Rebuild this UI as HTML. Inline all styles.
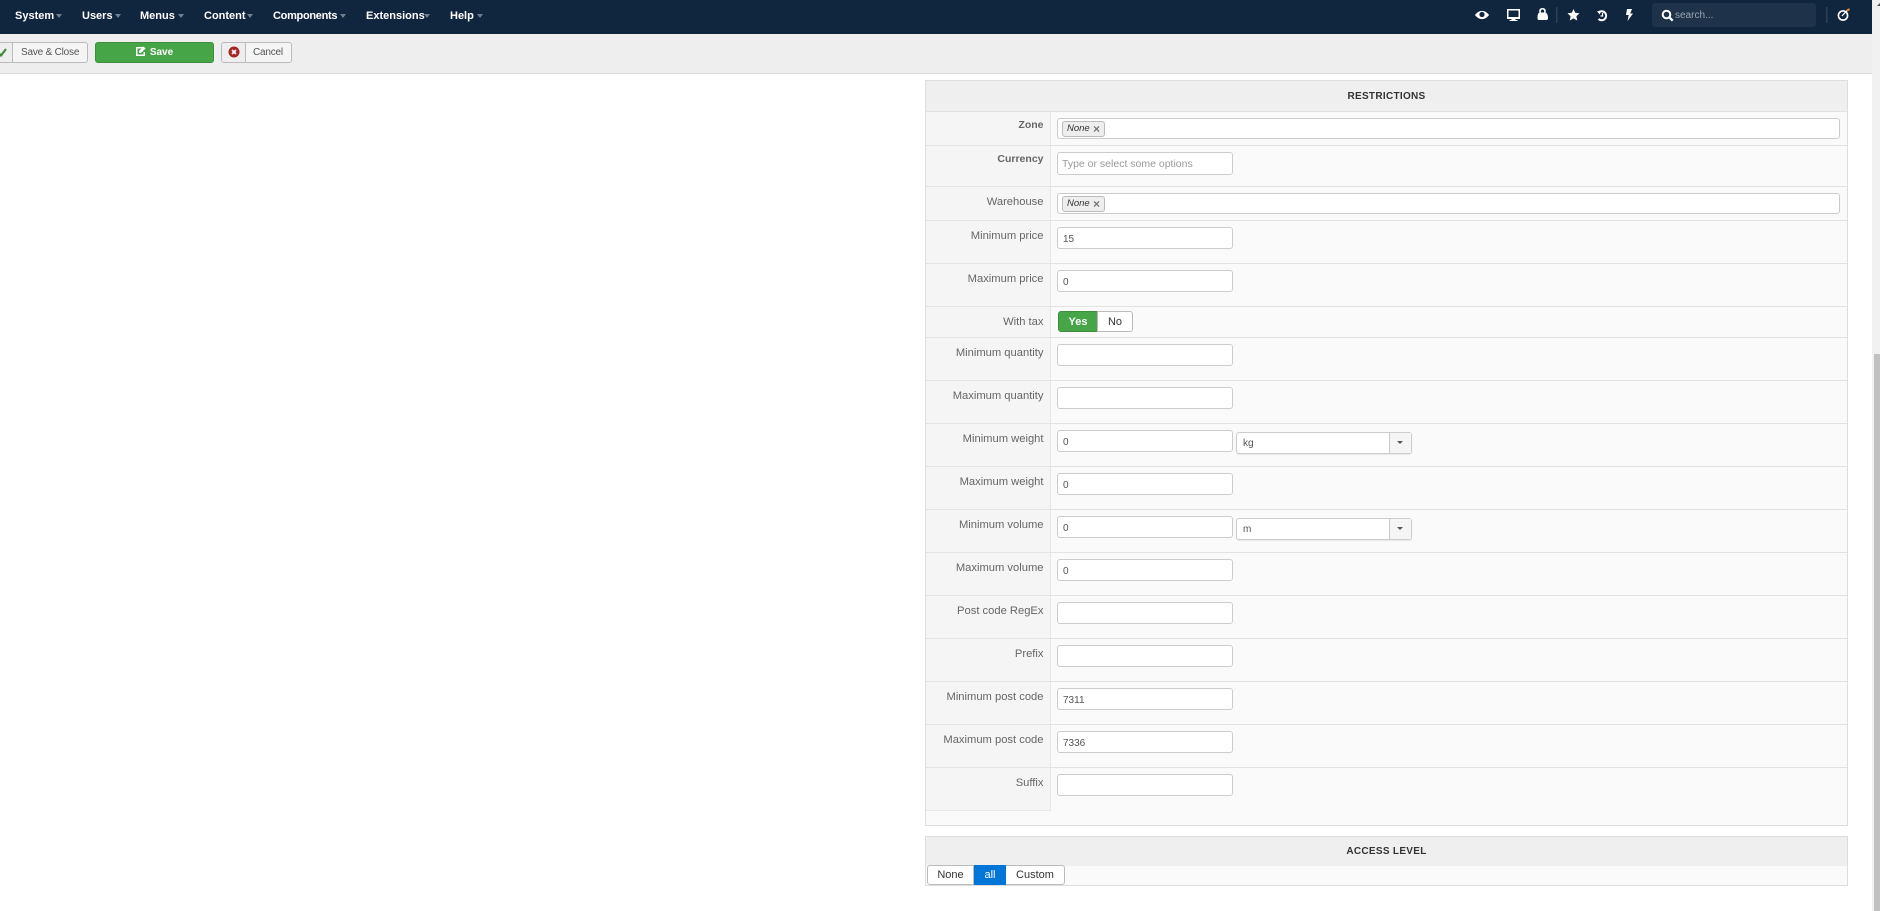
<!DOCTYPE html>
<html><head><meta charset="utf-8"><title>Restrictions</title>
<style>
html,body{margin:0;padding:0;width:1880px;height:911px;overflow:hidden;background:#fff;font-family:"Liberation Sans",Arial,sans-serif;font-size:12px;color:#555}
.a{position:absolute;box-sizing:border-box}
#top{left:0;top:0;width:1872px;height:34px;background:#10263f}
.m{position:absolute;top:7px;line-height:18px;color:#fff;font-weight:bold;font-size:11px;white-space:nowrap}
.c{position:absolute;top:14px;width:0;height:0;border:3.500px solid transparent;border-top:4px solid #6f7f8f;border-bottom:0}
#bar{left:0;top:34px;width:1872px;height:40px;background:#eee;border-bottom:1px solid #ddd}
.btn{position:absolute;top:42px;height:21px;border:1px solid #bbb;border-radius:3px;background:#f5f5f5;color:#555;font-size:10px;line-height:19px;box-sizing:border-box;white-space:nowrap}
.box{position:absolute;left:925px;width:923px;border:1px solid #ddd;background:#fafafa;box-sizing:border-box}
.hd{position:absolute;left:926px;width:921px;background:#efefef;text-align:center;font-weight:bold;font-size:10px;letter-spacing:.3px;color:#333}
.lc{position:absolute;left:926px;width:124px;background:#f5f5f5;border-right:1px solid #e8e8e8;border-bottom:1px solid #e8e8e8;box-sizing:content-box}
.hr{position:absolute;left:926px;width:921px;height:1px;background:#e2e2e2}
.l{position:absolute;left:926px;width:117.500px;text-align:right;line-height:18px;color:#666;font-size:11.200px;white-space:nowrap;margin-top:1px}
.i{position:absolute;left:1057px;width:176px;height:22px;background:#fff;border:1px solid #ccc;border-radius:3px;box-sizing:border-box;font-size:10px;line-height:23px;padding-left:5px;color:#555}
.z{position:absolute;left:1057px;width:783px;height:21px;background:#fff;border:1px solid #ccc;border-radius:3px;box-sizing:border-box}
.tag{position:absolute;left:4px;top:2px;width:43px;height:16px;background:#eee;border:1px solid #bbb;border-radius:3px;box-sizing:border-box;font-size:9.500px;font-style:italic;line-height:14px;padding-left:4px;color:#333}
.tag b{position:absolute;left:30px;top:0;font-style:normal;font-weight:bold;font-size:12px;color:#777}
.s{position:absolute;left:1236px;width:176px;height:22px;background:#fff;border:1px solid #ccc;border-radius:3px;box-sizing:border-box;font-size:10px;line-height:21px;padding-left:6px;color:#555;box-shadow:0 1px 1px rgba(0,0,0,.08)}
.s i{position:absolute;right:0;top:0;width:21px;height:20px;background:#f5f5f5;border-left:1px solid #ccc}
.s i:after{content:"";position:absolute;left:7px;top:8px;border:3px solid transparent;border-top:3px solid #555;border-bottom:0}
</style></head><body>
<div class="a" id="top"></div>
<span class="m" style="left:15px">System</span><i class="c" style="left:56px"></i>
<span class="m" style="left:82px">Users</span><i class="c" style="left:115px"></i>
<span class="m" style="left:140px">Menus</span><i class="c" style="left:178px"></i>
<span class="m" style="left:204px">Content</span><i class="c" style="left:247px"></i>
<span class="m" style="left:273px;letter-spacing:-.3px">Components</span><i class="c" style="left:340px"></i>
<span class="m" style="left:366px">Extensions</span><i class="c" style="left:424px"></i>
<span class="m" style="left:450px">Help</span><i class="c" style="left:477px"></i>

<svg class="a" style="left:1470px;top:0" width="410" height="34" viewBox="1470 0 410 34">
<path d="M1475 15c4-5.500 10-5.500 14 0c-4 5.500-10 5.500-14 0z" fill="#fff"/><circle cx="1482" cy="14.500" r="2.600" fill="#10263f"/>
<path d="M1507 9h13v10h-4.500v1h2v1h-8v-1h2v-1h-4.500z" fill="#fff"/><rect x="1508.500" y="10.500" width="10" height="6.500" fill="#10263f"/>
<path d="M1537.500 18c0-3 .5-5 2-5.500c-1-3 .8-4.500 3-4.500s4 1.500 3 4.500c1.500 .5 2.500 2.500 2.500 5.500c0 1.500-.5 2-2 2h-6.500c-1.500 0-2-.5-2-2z" fill="#fff"/><path d="M1541 12.500c-.5-2 .3-3 1.500-3s2 1 1.500 3z" fill="#10263f"/>
<rect x="1556" y="7" width="1.500" height="16" fill="#2c4156"/>
<path d="M1573.500 9l1.700 3.800 4.300 .5-3.100 2.900 .8 4.300-3.700-2.100-3.700 2.100 .8-4.300-3.100-2.900 4.300-.5z" fill="#fff"/>
<path d="M1598.500 12.500a4.500 4.500 0 1 1 0 6.500" fill="none" stroke="#fff" stroke-width="2"/><path d="M1597 11l4 .5-1.500 3z" fill="#fff"/><path d="M1602.500 13v3h-2" fill="none" stroke="#fff" stroke-width="1.300"/>
<path d="M1627 9h5l-1.800 4.500h2.800l-5.500 7.500 1.200-6h-2.700z" fill="#fff"/>
<rect x="1826" y="7" width="1.500" height="16" fill="#2c4156"/>
<circle cx="1843" cy="15.500" r="4.600" fill="none" stroke="#fff" stroke-width="1.600"/><path d="M1842 16l5-5.500" stroke="#fff" stroke-width="1.300"/><path d="M1846.500 11l3-2" stroke="#e08a2e" stroke-width="2"/>
</svg>
<div class="a" style="left:1652px;top:3px;width:164px;height:24px;background:#1e3349;border-radius:3px"></div>
<svg class="a" style="left:1661px;top:9px" width="13" height="13" viewBox="0 0 13 13"><circle cx="5.500" cy="5.500" r="3.800" fill="none" stroke="#fff" stroke-width="2"/><path d="M8.200 8.200l3.500 3.500" stroke="#fff" stroke-width="2.200"/></svg>
<div class="a" style="left:1675px;top:7px;line-height:18px;font-size:10px;color:#98a4b0">search...</div>

<div class="a" id="bar"></div>
<div class="btn" style="left:-16px;width:104px;"><span style="position:absolute;left:0;top:0;width:27px;height:19px;background:#eee;border-right:1px solid #bbb"></span><svg style="position:absolute;left:13px;top:5px" width="10" height="9" viewBox="0 0 10 9"><path d="M.5 5L3 7.500L8 1" fill="none" stroke="#3d8b3d" stroke-width="2.200"/></svg><span style="position:absolute;left:36px;letter-spacing:-.2px">Save &amp; Close</span></div>
<div class="btn" style="left:95px;width:119px;background:#46a546;border-color:#3c8e3c;color:#fff;text-align:center;font-weight:bold;font-size:10px"><svg style="position:relative;top:1px;margin-right:4px" width="10" height="10" viewBox="0 0 10 10"><path d="M0 1h7v1.500H1.500v6h6V6H9v4H0z" fill="#fff"/><path d="M3 5l4.500-4.500L9.500 2.500L5 7H3z" fill="#fff"/></svg>Save</div>
<div class="btn" style="left:221px;width:71px;"><span style="position:absolute;left:0;top:0;width:23px;height:19px;background:#eee;border-right:1px solid #bbb;border-radius:3px 0 0 3px"></span><svg style="position:absolute;left:6px;top:3px" width="12" height="12" viewBox="0 0 12 12"><circle cx="6" cy="6" r="5.500" fill="#a52828"/><path d="M4 4l4 4M8 4l-4 4" stroke="#fff" stroke-width="1.600"/></svg><span style="position:absolute;left:31px;letter-spacing:-.2px">Cancel</span></div>

<div class="box" style="top:80px;height:746px"></div>
<div class="hd" style="top:81px;height:30px;line-height:31px">RESTRICTIONS</div>
<div class="lc" style="top:111px;height:699px"></div>
<div class="hr" style="top:111px"></div><div class="hr" style="top:145px"></div><div class="hr" style="top:186px"></div><div class="hr" style="top:220px"></div><div class="hr" style="top:263px"></div><div class="hr" style="top:306px"></div><div class="hr" style="top:337px"></div><div class="hr" style="top:380px"></div><div class="hr" style="top:423px"></div><div class="hr" style="top:466px"></div><div class="hr" style="top:509px"></div><div class="hr" style="top:552px"></div><div class="hr" style="top:595px"></div><div class="hr" style="top:638px"></div><div class="hr" style="top:681px"></div><div class="hr" style="top:724px"></div><div class="hr" style="top:767px"></div>

<div class="l" style="top:116px;font-weight:bold;font-size:10.500px;margin-top:0">Zone</div>
<div class="z" style="top:118px"><div class="tag">None<b>×</b></div></div>
<div class="l" style="top:150px;font-weight:bold;font-size:10.500px;margin-top:0">Currency</div>
<div class="i" style="top:152px;height:23px;color:#999;font-size:10.500px;padding-left:4px">Type or select some options</div>
<div class="l" style="top:192px">Warehouse</div>
<div class="z" style="top:193px"><div class="tag">None<b>×</b></div></div>
<div class="l" style="top:226px">Minimum price</div><div class="i" style="top:227px">15</div>
<div class="l" style="top:269px">Maximum price</div><div class="i" style="top:270px">0</div>
<div class="l" style="top:312px">With tax</div>
<div class="a" style="left:1058px;top:311px;width:40px;height:21px;background:#46a546;border:1px solid #3c8e3c;border-radius:3px 0 0 3px;color:#fff;font-weight:bold;font-size:11px;text-align:center;line-height:20px">Yes</div>
<div class="a" style="left:1097px;top:311px;width:36px;height:21px;background:#fff;border:1px solid #bbb;border-radius:0 3px 3px 0;color:#333;font-size:11px;text-align:center;line-height:20px">No</div>
<div class="l" style="top:343px">Minimum quantity</div><div class="i" style="top:344px"></div>
<div class="l" style="top:386px">Maximum quantity</div><div class="i" style="top:387px"></div>
<div class="l" style="top:429px">Minimum weight</div><div class="i" style="top:430px">0</div>
<div class="s" style="top:432px">kg<i></i></div>
<div class="l" style="top:472px">Maximum weight</div><div class="i" style="top:473px">0</div>
<div class="l" style="top:515px">Minimum volume</div><div class="i" style="top:516px">0</div>
<div class="s" style="top:518px">m<i></i></div>
<div class="l" style="top:558px">Maximum volume</div><div class="i" style="top:559px">0</div>
<div class="l" style="top:601px">Post code RegEx</div><div class="i" style="top:602px"></div>
<div class="l" style="top:644px">Prefix</div><div class="i" style="top:645px"></div>
<div class="l" style="top:687px">Minimum post code</div><div class="i" style="top:688px">7311</div>
<div class="l" style="top:730px">Maximum post code</div><div class="i" style="top:731px">7336</div>
<div class="l" style="top:773px">Suffix</div><div class="i" style="top:774px"></div>

<div class="box" style="top:836px;height:50px"></div>
<div class="hd" style="top:837px;height:29px;line-height:30px">ACCESS LEVEL</div>
<div class="a" style="left:927px;top:865px;width:47px;height:20px;background:#fff;border:1px solid #bbb;border-radius:3px 0 0 3px;color:#333;font-size:11px;text-align:center;line-height:19px">None</div>
<div class="a" style="left:974px;top:865px;width:32px;height:20px;background:#0275d8;color:#fff;font-size:11px;text-align:center;line-height:21px">all</div>
<div class="a" style="left:1006px;top:865px;width:59px;height:20px;background:#fff;border:1px solid #bbb;border-left:0;border-radius:0 3px 3px 0;color:#333;font-size:11px;text-align:center;line-height:19px">Custom</div>

<div class="a" style="left:1872px;top:0;width:8px;height:911px;background:#f1f1f1"></div>
<div class="a" style="left:1874px;top:354px;width:6px;height:557px;background:#c1c1c1"></div>
<div class="a" style="left:1877px;top:3px;border:3px solid transparent;border-bottom:3px solid #505050;border-top:0"></div>
</body></html>
